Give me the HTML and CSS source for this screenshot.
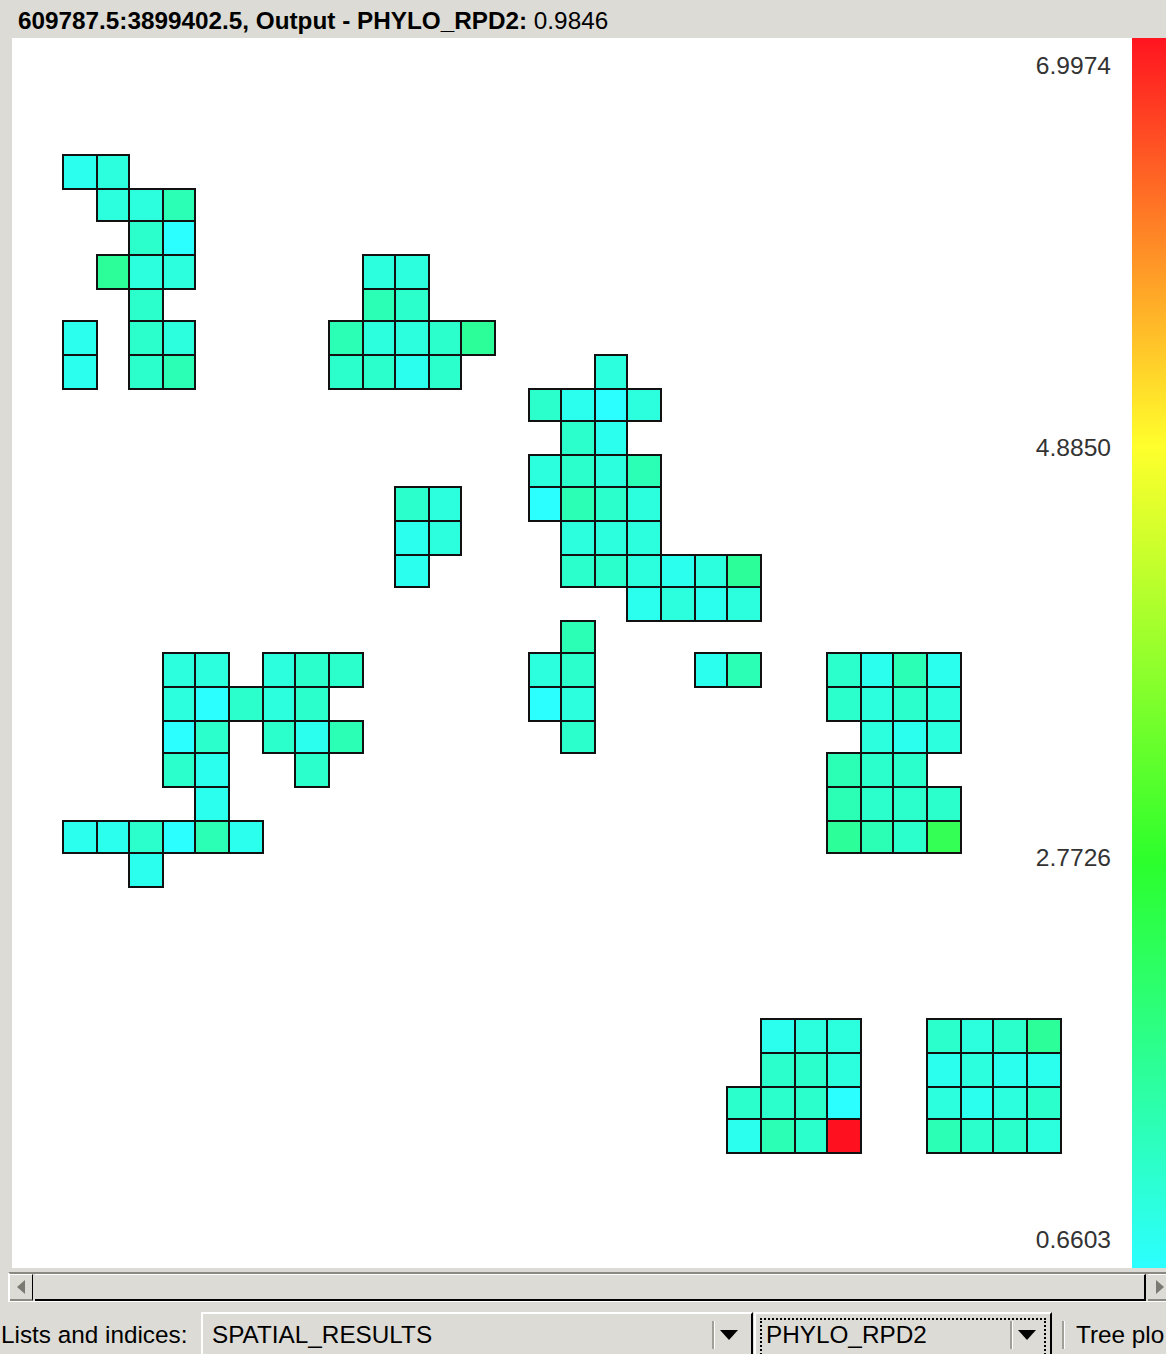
FILE: index.html
```html
<!DOCTYPE html>
<html lang="en">
<head>
    <meta charset="UTF-8">
    <title>Spatial results</title>
    <link rel="stylesheet" href="styles.css">
</head>
<body>
    <div class="title"><b>609787.5:3899402.5, Output - PHYLO_RPD2:</b> 0.9846</div>

    <div class="main">
        <svg class="plot" viewBox="12 38 1120 1230" width="1120" height="1230">
            <text class="tick" x="1111" y="74">6.9974</text>
            <text class="tick" x="1111" y="456">4.8850</text>
            <text class="tick" x="1111" y="866">2.7726</text>
            <text class="tick" x="1111" y="1248">0.6603</text>

            <!-- top left group -->
            <rect class="k1" x="63" y="155" width="34" height="34"/>
            <rect class="k2" x="97" y="155" width="32" height="34"/>
            <rect class="k2" x="97" y="189" width="32" height="32"/>
            <rect class="k2" x="129" y="189" width="34" height="32"/>
            <rect class="k4" x="163" y="189" width="32" height="32"/>
            <rect class="k3" x="129" y="221" width="34" height="34"/>
            <rect class="k0" x="163" y="221" width="32" height="34"/>
            <rect class="k5" x="97" y="255" width="32" height="34"/>
            <rect class="k2" x="129" y="255" width="34" height="34"/>
            <rect class="k2" x="163" y="255" width="32" height="34"/>
            <rect class="k3" x="129" y="289" width="34" height="32"/>
            <rect class="k1" x="63" y="321" width="34" height="34"/>
            <rect class="k3" x="129" y="321" width="34" height="34"/>
            <rect class="k2" x="163" y="321" width="32" height="34"/>
            <rect class="k1" x="63" y="355" width="34" height="34"/>
            <rect class="k3" x="129" y="355" width="34" height="34"/>
            <rect class="k4" x="163" y="355" width="32" height="34"/>

            <!-- top middle group -->
            <rect class="k2" x="363" y="255" width="32" height="34"/>
            <rect class="k2" x="395" y="255" width="34" height="34"/>
            <rect class="k4" x="363" y="289" width="32" height="32"/>
            <rect class="k3" x="395" y="289" width="34" height="32"/>
            <rect class="k4" x="329" y="321" width="34" height="34"/>
            <rect class="k2" x="363" y="321" width="32" height="34"/>
            <rect class="k2" x="395" y="321" width="34" height="34"/>
            <rect class="k3" x="429" y="321" width="32" height="34"/>
            <rect class="k5" x="461" y="321" width="34" height="34"/>
            <rect class="k3" x="329" y="355" width="34" height="34"/>
            <rect class="k3" x="363" y="355" width="32" height="34"/>
            <rect class="k1" x="395" y="355" width="34" height="34"/>
            <rect class="k3" x="429" y="355" width="32" height="34"/>

            <!-- centre group -->
            <rect class="k2" x="595" y="355" width="32" height="34"/>
            <rect class="k3" x="529" y="389" width="32" height="32"/>
            <rect class="k1" x="561" y="389" width="34" height="32"/>
            <rect class="k0" x="595" y="389" width="32" height="32"/>
            <rect class="k2" x="627" y="389" width="34" height="32"/>
            <rect class="k3" x="561" y="421" width="34" height="34"/>
            <rect class="k1" x="595" y="421" width="32" height="34"/>
            <rect class="k2" x="529" y="455" width="32" height="32"/>
            <rect class="k3" x="561" y="455" width="34" height="32"/>
            <rect class="k2" x="595" y="455" width="32" height="32"/>
            <rect class="k4" x="627" y="455" width="34" height="32"/>
            <rect class="k0" x="529" y="487" width="32" height="34"/>
            <rect class="k4" x="561" y="487" width="34" height="34"/>
            <rect class="k3" x="595" y="487" width="32" height="34"/>
            <rect class="k2" x="627" y="487" width="34" height="34"/>
            <rect class="k2" x="561" y="521" width="34" height="34"/>
            <rect class="k2" x="595" y="521" width="32" height="34"/>
            <rect class="k2" x="627" y="521" width="34" height="34"/>
            <rect class="k3" x="561" y="555" width="34" height="32"/>
            <rect class="k3" x="595" y="555" width="32" height="32"/>
            <rect class="k2" x="627" y="555" width="34" height="32"/>
            <rect class="k1" x="661" y="555" width="34" height="32"/>
            <rect class="k2" x="695" y="555" width="32" height="32"/>
            <rect class="k5" x="727" y="555" width="34" height="32"/>
            <rect class="k1" x="627" y="587" width="34" height="34"/>
            <rect class="k2" x="661" y="587" width="34" height="34"/>
            <rect class="k1" x="695" y="587" width="32" height="34"/>
            <rect class="k2" x="727" y="587" width="34" height="34"/>

            <!-- small group under the middle -->
            <rect class="k3" x="395" y="487" width="34" height="34"/>
            <rect class="k2" x="429" y="487" width="32" height="34"/>
            <rect class="k1" x="395" y="521" width="34" height="34"/>
            <rect class="k2" x="429" y="521" width="32" height="34"/>
            <rect class="k1" x="395" y="555" width="34" height="32"/>

            <!-- small group under the centre -->
            <rect class="k4" x="561" y="621" width="34" height="32"/>
            <rect class="k2" x="529" y="653" width="32" height="34"/>
            <rect class="k3" x="561" y="653" width="34" height="34"/>
            <rect class="k0" x="529" y="687" width="32" height="34"/>
            <rect class="k2" x="561" y="687" width="34" height="34"/>
            <rect class="k3" x="561" y="721" width="34" height="32"/>
            <rect class="k1" x="695" y="653" width="32" height="34"/>
            <rect class="k4" x="727" y="653" width="34" height="34"/>

            <!-- right group -->
            <rect class="k3" x="827" y="653" width="34" height="34"/>
            <rect class="k1" x="861" y="653" width="32" height="34"/>
            <rect class="k4" x="893" y="653" width="34" height="34"/>
            <rect class="k1" x="927" y="653" width="34" height="34"/>
            <rect class="k3" x="827" y="687" width="34" height="34"/>
            <rect class="k2" x="861" y="687" width="32" height="34"/>
            <rect class="k3" x="893" y="687" width="34" height="34"/>
            <rect class="k2" x="927" y="687" width="34" height="34"/>
            <rect class="k2" x="861" y="721" width="32" height="32"/>
            <rect class="k1" x="893" y="721" width="34" height="32"/>
            <rect class="k2" x="927" y="721" width="34" height="32"/>
            <rect class="k4" x="827" y="753" width="34" height="34"/>
            <rect class="k3" x="861" y="753" width="32" height="34"/>
            <rect class="k3" x="893" y="753" width="34" height="34"/>
            <rect class="k4" x="827" y="787" width="34" height="34"/>
            <rect class="k3" x="861" y="787" width="32" height="34"/>
            <rect class="k3" x="893" y="787" width="34" height="34"/>
            <rect class="k3" x="927" y="787" width="34" height="34"/>
            <rect class="k5" x="827" y="821" width="34" height="32"/>
            <rect class="k4" x="861" y="821" width="32" height="32"/>
            <rect class="k3" x="893" y="821" width="34" height="32"/>
            <rect class="k6" x="927" y="821" width="34" height="32"/>

            <!-- lower left group -->
            <rect class="k2" x="163" y="653" width="32" height="34"/>
            <rect class="k2" x="195" y="653" width="34" height="34"/>
            <rect class="k2" x="263" y="653" width="32" height="34"/>
            <rect class="k3" x="295" y="653" width="34" height="34"/>
            <rect class="k3" x="329" y="653" width="34" height="34"/>
            <rect class="k2" x="163" y="687" width="32" height="34"/>
            <rect class="k0" x="195" y="687" width="34" height="34"/>
            <rect class="k3" x="229" y="687" width="34" height="34"/>
            <rect class="k2" x="263" y="687" width="32" height="34"/>
            <rect class="k3" x="295" y="687" width="34" height="34"/>
            <rect class="k0" x="163" y="721" width="32" height="32"/>
            <rect class="k3" x="195" y="721" width="34" height="32"/>
            <rect class="k3" x="263" y="721" width="32" height="32"/>
            <rect class="k1" x="295" y="721" width="34" height="32"/>
            <rect class="k4" x="329" y="721" width="34" height="32"/>
            <rect class="k3" x="163" y="753" width="32" height="34"/>
            <rect class="k1" x="195" y="753" width="34" height="34"/>
            <rect class="k3" x="295" y="753" width="34" height="34"/>
            <rect class="k1" x="195" y="787" width="34" height="34"/>
            <rect class="k1" x="63" y="821" width="34" height="32"/>
            <rect class="k1" x="97" y="821" width="32" height="32"/>
            <rect class="k3" x="129" y="821" width="34" height="32"/>
            <rect class="k0" x="163" y="821" width="32" height="32"/>
            <rect class="k4" x="195" y="821" width="34" height="32"/>
            <rect class="k1" x="229" y="821" width="34" height="32"/>
            <rect class="k1" x="129" y="853" width="34" height="34"/>

            <!-- bottom groups -->
            <rect class="k1" x="761" y="1019" width="34" height="34"/>
            <rect class="k2" x="795" y="1019" width="32" height="34"/>
            <rect class="k2" x="827" y="1019" width="34" height="34"/>
            <rect class="k3" x="761" y="1053" width="34" height="34"/>
            <rect class="k3" x="795" y="1053" width="32" height="34"/>
            <rect class="k2" x="827" y="1053" width="34" height="34"/>
            <rect class="k3" x="727" y="1087" width="34" height="32"/>
            <rect class="k3" x="761" y="1087" width="34" height="32"/>
            <rect class="k3" x="795" y="1087" width="32" height="32"/>
            <rect class="k0" x="827" y="1087" width="34" height="32"/>
            <rect class="k1" x="727" y="1119" width="34" height="34"/>
            <rect class="k4" x="761" y="1119" width="34" height="34"/>
            <rect class="k3" x="795" y="1119" width="32" height="34"/>
            <rect class="hot" x="827" y="1119" width="34" height="34"/>

            <rect class="k3" x="927" y="1019" width="34" height="34"/>
            <rect class="k2" x="961" y="1019" width="32" height="34"/>
            <rect class="k3" x="993" y="1019" width="34" height="34"/>
            <rect class="k5" x="1027" y="1019" width="34" height="34"/>
            <rect class="k1" x="927" y="1053" width="34" height="34"/>
            <rect class="k2" x="961" y="1053" width="32" height="34"/>
            <rect class="k1" x="993" y="1053" width="34" height="34"/>
            <rect class="k1" x="1027" y="1053" width="34" height="34"/>
            <rect class="k2" x="927" y="1087" width="34" height="32"/>
            <rect class="k1" x="961" y="1087" width="32" height="32"/>
            <rect class="k2" x="993" y="1087" width="34" height="32"/>
            <rect class="k3" x="1027" y="1087" width="34" height="32"/>
            <rect class="k4" x="927" y="1119" width="34" height="34"/>
            <rect class="k3" x="961" y="1119" width="32" height="34"/>
            <rect class="k3" x="993" y="1119" width="34" height="34"/>
            <rect class="k2" x="1027" y="1119" width="34" height="34"/>
        </svg>
        <div class="legend"></div>
    </div>

    <div class="scrollbar">
        <div class="step">
            <svg width="10" height="16" viewBox="0 0 10 16"><path class="step-arrow" d="M9 1 L1 8 L9 15 Z"/></svg>
        </div>
        <div class="thumb"></div>
        <div class="step step-right">
            <svg width="10" height="16" viewBox="0 0 10 16"><path class="step-arrow" d="M1 1 L9 8 L1 15 Z"/></svg>
        </div>
    </div>

    <div class="controls">
        <span class="label">Lists and indices:</span>
        <div class="combo combo-lists">
            <span class="combo-text">SPATIAL_RESULTS</span>
            <span class="combo-sep"></span>
            <span class="combo-arrow"></span>
        </div>
        <div class="combo combo-index">
            <div class="focus">
                <span class="combo-text">PHYLO_RPD2</span>
                <span class="combo-sep"></span>
                <span class="combo-arrow"></span>
            </div>
        </div>
        <span class="combo-sep tool-sep"></span>
        <span class="tool">Tree plo</span>
    </div>
</body>
</html>
```

FILE: styles.css
```css
html, body {
    margin: 0;
    height: 100%;
}
body {
    width: 1166px;
    height: 1354px;
    overflow: hidden;
    display: flex;
    flex-direction: column;
    background-color: #dcdbd5;
    color: #000;
    font-family: "Liberation Sans", Arial, sans-serif;
    font-size: 24.3px;
}

.title {
    height: 38px;
    line-height: 41px;
    padding-left: 18px;
    white-space: nowrap;
    flex: none;
}

.main {
    display: flex;
    height: 1230px;
    padding-left: 12px;
    flex: none;
}
.plot {
    display: block;
    background-color: #fff;
    flex: none;
}
.plot rect {
    stroke: #111;
    stroke-width: 2;
}
.tick {
    fill: #333;
    font-size: 24.6px;
    text-anchor: end;
}
.k0 { fill: #2cffff; }
.k1 { fill: #2bffee; }
.k2 { fill: #2bffde; }
.k3 { fill: #2bffcc; }
.k4 { fill: #2bffb6; }
.k5 { fill: #2cff9a; }
.k6 { fill: #33ff55; }
.hot { fill: #ff101f; }

.legend {
    width: 34px;
    flex: none;
    background: linear-gradient(to bottom,
        #ff1420 0,
        #ffff2c 33.2%,
        #2cff2c 67%,
        #2cffff 100%);
}

.scrollbar {
    display: flex;
    height: 30px;
    margin-top: 4px;
    margin-left: 8px;
    box-sizing: border-box;
    border-top: 2px solid #8a8880;
    border-left: 2px solid #fff;
    border-bottom: 1px solid #fff;
    flex: none;
}
.step {
    width: 23px;
    box-sizing: border-box;
    border-top: 1px solid #fff;
    border-bottom: 2px solid #8a8880;
    border-right: 1px solid #000;
    display: flex;
    align-items: center;
    justify-content: center;
    flex: none;
}
.step-right {
    border-right: 0;
    margin-left: 2px;
    margin-right: -5px;
}
.step-arrow {
    fill: #7a7972;
}
.thumb {
    flex: 1;
    margin-left: 2px;
    border-top: 1px solid #fff;
    border-right: 2px solid #000;
    border-bottom: 2px solid #000;
}

.controls {
    display: flex;
    align-items: flex-start;
    margin-top: 10px;
    height: 42px;
    white-space: nowrap;
    flex: none;
}
.label {
    padding-left: 1px;
    width: 199px;
    line-height: 46px;
    box-sizing: border-box;
    flex: none;
}
.combo {
    height: 50px;
    box-sizing: border-box;
    border-top: 2px solid #fff;
    border-left: 2px solid #fff;
    border-right: 2px solid #000;
    display: flex;
    flex: none;
}
.combo-lists {
    width: 552px;
    margin-left: 2px;
    padding-left: 9px;
}
.combo-index {
    width: 298px;
    margin-left: 1px;
    padding: 4px 4px 0 4px;
}
.focus {
    flex: 1;
    display: flex;
    border: 2px dotted #000;
    height: 40px;
    padding-left: 4px;
}
.combo-text {
    flex: 1;
    line-height: 42px;
}
.focus .combo-text {
    line-height: 30px;
}
.combo-sep {
    width: 2px;
    height: 28px;
    margin-top: 7px;
    background-color: #a09f98;
    border-right: 1px solid #fff;
    flex: none;
}
.focus .combo-sep {
    margin-top: 1px;
}
.combo-arrow {
    width: 0;
    height: 0;
    margin: 16px 13px 0 5px;
    border-left: 9px solid transparent;
    border-right: 9px solid transparent;
    border-top: 10px solid #000;
    flex: none;
}
.focus .combo-arrow {
    margin: 10px 8px 0 5px;
}
.tool-sep {
    margin-left: 10px;
    margin-top: 9px;
}
.tool {
    margin-left: 11px;
    line-height: 46px;
}
```
